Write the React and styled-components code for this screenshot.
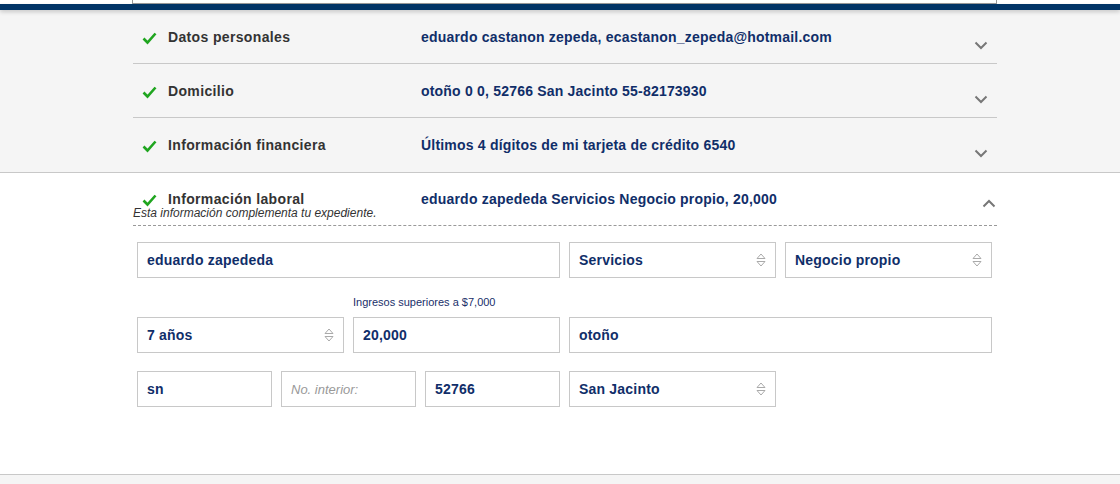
import React from 'react'
import styled, { createGlobalStyle } from 'styled-components';

const GlobalStyle = createGlobalStyle`
    body {
        margin: 0;
        background: #fff;
        font-family: "Liberation Sans", Arial, sans-serif;
    }
`

const summary = [
    { title: 'Datos personales', value: 'eduardo castanon zepeda, ecastanon_zepeda@hotmail.com' },
    { title: 'Domicilio', value: 'otoño 0 0, 52766 San Jacinto 55-82173930' },
    { title: 'Información financiera', value: 'Últimos 4 dígitos de mi tarjeta de crédito 6540' },
]

const Check = () => (
    <svg width="15" height="13" viewBox="0 0 15 13">
        <path d="M1.5 6.5 L5.5 10.5 L13.5 1.5" fill="none" stroke="#1fa51f" strokeWidth="2.6" />
    </svg>
)

const Chevron = ({ up }) => (
    <svg width="14" height="9" viewBox="0 0 14 9">
        <path d={up ? "M1.5 7.5 L7 2 L12.5 7.5" : "M1.5 1.5 L7 7 L12.5 1.5"} fill="none" stroke="#777" strokeWidth="2" />
    </svg>
)

const Arrows = () => (
    <svg width="10" height="14" viewBox="0 0 10 14">
        <path d="M1 5.5 L5 1 L9 5.5 Z" fill="none" stroke="#aaa" strokeWidth="1" />
        <path d="M1 8.5 L5 13 L9 8.5 Z" fill="none" stroke="#aaa" strokeWidth="1" />
    </svg>
)

const Input = ({ value, placeholder, select }) => (
    <Field>
        {value ? <span>{value}</span> : <Placeholder>{placeholder}</Placeholder>}
        {select && <Arrows />}
    </Field>
)

const App = () => {
    return (
        <>
            <GlobalStyle />
            <TopStrip><div /></TopStrip>
            <NavBar />
            <Collapsed>
                <Container>
                    {summary.map((s) => (
                        <Row key={s.title}>
                            <Mark><Check /></Mark>
                            <Title>{s.title}</Title>
                            <Value>{s.value}</Value>
                            <Toggle><Chevron /></Toggle>
                        </Row>
                    ))}
                </Container>
            </Collapsed>
            <Expanded>
                <Container>
                    <Row open>
                        <Mark><Check /></Mark>
                        <Title>Información laboral</Title>
                        <Value>eduardo zapededa Servicios Negocio propio, 20,000</Value>
                        <Toggle up><Chevron up /></Toggle>
                    </Row>
                    <Note>Esta información complementa tu expediente.</Note>
                    <Form>
                        <FieldRow>
                            <Cell span={2}><Input value="eduardo zapededa" /></Cell>
                            <Cell><Input value="Servicios" select /></Cell>
                            <Cell><Input value="Negocio propio" select /></Cell>
                        </FieldRow>
                        <FieldRow>
                            <Cell><Input value="7 años" select /></Cell>
                            <Cell>
                                <Hint>Ingresos superiores a $7,000</Hint>
                                <Input value="20,000" />
                            </Cell>
                            <Cell span={2}><Input value="otoño" /></Cell>
                        </FieldRow>
                        <FieldRow>
                            <Split>
                                <Input value="sn" />
                                <Input placeholder="No. interior:" />
                                <Input value="52766" />
                            </Split>
                            <Cell><Input value="San Jacinto" select /></Cell>
                        </FieldRow>
                    </Form>
                </Container>
            </Expanded>
            <Footer />
        </>
    )
}

const TopStrip = styled.div`
    height: 4px;
    div {
        width: 865px;
        height: 4px;
        margin: 0 calc(50% - 437px) 0 calc(50% - 428px);
        box-sizing: border-box;
        border: 1px solid #999;
        border-top: none;
        background: #fff;
    }
`
const NavBar = styled.div`
    height: 6px;
    background: #013466;
    box-shadow: 0 2px 4px rgba(0, 0, 0, 0.18);
    position: relative;
`
const Collapsed = styled.section`
    background: #f5f5f5;
    border-bottom: 1px solid #c8c8c8;
`
const Expanded = styled.section`
    background: #fff;
    padding-bottom: 67px;
    border-bottom: 1px solid #c8c8c8;
`
const Footer = styled.div`
    height: 20px;
    background: #f5f5f5;
`
const Container = styled.div`
    width: 864px;
    margin: 0 calc(50% - 437px) 0 calc(50% - 427px);
`
const Row = styled.div`
    display: grid;
    grid-template-columns: 35px 253px 1fr 40px;
    height: ${p => p.open ? '33px' : '54px'};
    padding-top: ${p => p.open ? '18px' : '19px'};
    box-sizing: border-box;
    border-bottom: ${p => p.open ? 'none' : '1px solid #c8c8c8'};
    &:last-child {
        border-bottom: none;
    }
`
const Mark = styled.div`
    padding: 2px 0 0 9px;
`
const Title = styled.div`
    font-size: 14px;
    font-weight: 700;
    line-height: 16px;
    letter-spacing: 0.35px;
    color: #333;
`
const Value = styled.div`
    font-size: 14px;
    font-weight: 700;
    line-height: 16px;
    letter-spacing: 0.2px;
    color: #102e69;
`
const Toggle = styled.div`
    display: flex;
    justify-content: flex-end;
    padding-right: ${p => p.up ? '1px' : '9px'};
    padding-top: ${p => p.up ? '8px' : '12px'};
`
const Note = styled.div`
    font-size: 12px;
    font-style: italic;
    color: #333;
    line-height: 14px;
    padding-bottom: 5px;
    border-bottom: 1px dashed #999;
`
const Form = styled.div`
    display: flex;
    flex-direction: column;
    gap: 18px;
    padding: 16px 5px 0 4px;
`
const FieldRow = styled.div`
    display: grid;
    grid-template-columns: repeat(4, 1fr);
    column-gap: 9px;
    align-items: end;
`
const Cell = styled.div`
    grid-column: span ${p => p.span || 1};
`
const Split = styled.div`
    grid-column: span 2;
    display: grid;
    grid-template-columns: repeat(3, 1fr);
    column-gap: 9px;
`
const Field = styled.div`
    height: 36px;
    box-sizing: border-box;
    border: 1px solid #c8c8c8;
    background: #fff;
    display: flex;
    align-items: center;
    justify-content: space-between;
    padding: 0 9px 0 9px;
    font-size: 14px;
    font-weight: 700;
    letter-spacing: 0.2px;
    color: #102e69;
    svg {
        flex-shrink: 0;
    }
`
const Placeholder = styled.span`
    font-size: 13px;
    font-weight: 400;
    font-style: italic;
    letter-spacing: 0;
    color: #999;
`
const Hint = styled.div`
    font-size: 11px;
    line-height: 13px;
    color: #1a2f6a;
    margin-bottom: 8px;
`

export default App;
